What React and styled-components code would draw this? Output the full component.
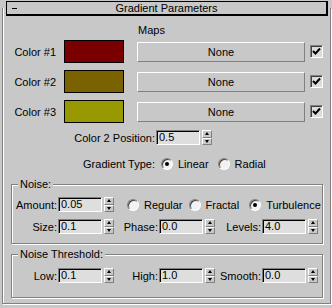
import React from "react";
import styled, { createGlobalStyle } from "styled-components";

const GlobalStyle = createGlobalStyle`
  html, body { margin: 0; padding: 0; background: #c8c8c8; }
  body {
    font-family: "Liberation Sans", Arial, sans-serif;
    font-size: 11px;
    color: #000;
  }
  * { box-sizing: border-box; }
`;

const Panel = styled.div`
  width: 332px;
  height: 308px;
  overflow: hidden;
  padding: 8px 0 0 2px;
`;

const Frame = styled.div`
  width: 329px;
  display: flex;
  flex-direction: column;
  border: 1px solid #808080;
  border-top: none;
  box-shadow: 1px 1px 0 #fff, inset 1px 0 0 #fff;
  padding-bottom: 5px;
`;

const TitleBar = styled.div`
  display: grid;
  grid-template-columns: 1fr auto 1fr;
  align-items: center;
  height: 15px;
  margin: -7px 2px 0 3px;
  border: 1px solid #000;
  border-right-width: 2px;
  border-bottom-width: 2px;
  background: #c8c8c8;
  line-height: 12px;
`;

const Collapse = styled.span`
  width: 5px;
  height: 1px;
  margin-left: 5px;
  background: #000;
`;

const Title = styled.span`
  text-align: center;
`;

const MapsLabel = styled.div`
  margin-top: 8px;
  padding-left: 135px;
  line-height: 12px;
`;

const ColorList = styled.div`
  display: flex;
  flex-direction: column;
  gap: 7px;
  margin-top: 4px;
`;

const ColorRow = styled.div`
  display: flex;
  align-items: center;
  height: 23px;
`;

const RowLabel = styled.span`
  width: ${(p) => p.$w}px;
  text-align: right;
  white-space: nowrap;
  line-height: 12px;
`;

const Swatch = styled.div`
  width: 60px;
  height: 23px;
  margin-left: 8px;
  border: 1px solid #000;
  background: ${(p) => p.$color};
`;

const MapButton = styled.div`
  width: 168px;
  height: 20px;
  margin-left: 13px;
  display: flex;
  align-items: center;
  justify-content: center;
  border: 1px solid;
  border-color: #fff #808080 #808080 #fff;
`;

const Check = styled.div`
  width: 13px;
  height: 13px;
  margin-left: 5px;
  border: 1px solid;
  border-color: #808080 #fff #fff #808080;
  box-shadow: inset 1px 1px 0 #404040;
  background: #dcdcdc;
  display: flex;
  align-items: center;
  justify-content: center;
`;

const LineRow = styled.div`
  display: flex;
  align-items: center;
  height: ${(p) => p.$h}px;
  margin-top: ${(p) => p.$top}px;
`;

const FieldWrap = styled.div`
  display: flex;
  align-items: center;
  height: 15px;
`;

const FieldLabel = styled.span`
  margin-right: 1px;
  white-space: nowrap;
  line-height: 12px;
  ${(p) => (p.$w ? `width: ${p.$w}px; text-align: right;` : "")}
`;

const Edit = styled.div`
  width: 44px;
  height: 15px;
  padding-left: 2px;
  border: 1px solid;
  border-color: #808080 #fff #fff #808080;
  box-shadow: inset 1px 1px 0 #000;
  background: #dedede;
  line-height: 13px;
`;

const Spinner = styled.div`
  width: 10px;
  height: 15px;
  margin-left: 2px;
  display: flex;
  flex-direction: column;
`;

const SpinBtn = styled.div`
  flex: 1;
  display: flex;
  align-items: center;
  justify-content: center;
  border: 1px solid;
  border-color: #fff #808080 #808080 #fff;
  &::after {
    content: "";
    border-left: 2px solid transparent;
    border-right: 2px solid transparent;
    ${(p) => (p.$down ? "border-top: 3px solid #000;" : "border-bottom: 3px solid #000;")}
  }
`;

const RadioSet = styled.div`
  display: flex;
  align-items: center;
  margin-left: ${(p) => p.$left}px;
`;

const RadioItem = styled.label`
  display: flex;
  align-items: center;
  gap: 5px;
  margin-right: ${(p) => p.$gap}px;
  line-height: 12px;
`;

const RadioDot = styled.span`
  width: 12px;
  height: 12px;
  border-radius: 50%;
  border: 1px solid;
  border-color: #808080 #fff #fff #808080;
  box-shadow: inset 1px 1px 0 #404040;
  background: #f2f2f2;
  display: flex;
  align-items: center;
  justify-content: center;
  &::after {
    content: "";
    width: 4px;
    height: 4px;
    border-radius: 50%;
    background: ${(p) => (p.$on ? "#000" : "transparent")};
  }
`;

const Group = styled.div`
  display: flex;
  flex-direction: column;
  width: 312px;
  margin: ${(p) => p.$top}px 0 0 8px;
  padding-bottom: ${(p) => p.$bottom}px;
  border: 1px solid #808080;
  box-shadow: 1px 1px 0 #fff, inset 1px 1px 0 #fff;
`;

const Legend = styled.span`
  align-self: flex-start;
  margin: -7px 0 0 6px;
  padding: 0 2px;
  line-height: 12px;
  background: #c8c8c8;
`;

const FieldGrid = styled.div`
  display: grid;
  grid-template-columns: 102px 101px 103px;
  grid-auto-rows: 15px;
  row-gap: 7px;
  justify-items: end;
  margin-top: ${(p) => p.$top}px;
`;

const RadioCell = styled.div`
  grid-column: span 2;
  justify-self: start;
  display: flex;
  align-items: center;
  padding-left: 13px;
`;

function Field({ label, value, w }) {
  return (
    <FieldWrap>
      <FieldLabel $w={w}>{label}</FieldLabel>
      <Edit>{value}</Edit>
      <Spinner>
        <SpinBtn />
        <SpinBtn $down />
      </Spinner>
    </FieldWrap>
  );
}

function Radio({ label, on, gap = 0 }) {
  return (
    <RadioItem $gap={gap}>
      <RadioDot $on={on} />
      {label}
    </RadioItem>
  );
}

const colors = [
  { label: "Color #1", color: "#7a0000" },
  { label: "Color #2", color: "#7a6200" },
  { label: "Color #3", color: "#989800" },
];

export default function App() {
  return (
    <>
      <GlobalStyle />
      <Panel>
        <Frame>
          <TitleBar>
            <Collapse />
            <Title>Gradient Parameters</Title>
            <span />
          </TitleBar>
          <MapsLabel>Maps</MapsLabel>
          <ColorList>
            {colors.map((c) => (
              <ColorRow key={c.label}>
                <RowLabel $w={53}>{c.label}</RowLabel>
                <Swatch $color={c.color} />
                <MapButton>None</MapButton>
                <Check>
                  <svg width="9" height="9" viewBox="0 0 9 9">
                    <path d="M1 4 L3.5 6.5 L8 1.5" fill="none" stroke="#000" strokeWidth="2" />
                  </svg>
                </Check>
              </ColorRow>
            ))}
          </ColorList>
          <LineRow $h={15} $top={7}>
            <Field label="Color 2 Position:" value="0.5" w={152} />
          </LineRow>
          <LineRow $h={12} $top={13}>
            <RowLabel $w={152}>Gradient Type:</RowLabel>
            <RadioSet $left={6}>
              <Radio label="Linear" on gap={9} />
              <Radio label="Radial" />
            </RadioSet>
          </LineRow>
          <Group $top={14} $bottom={9}>
            <Legend>Noise:</Legend>
            <FieldGrid $top={7}>
              <Field label="Amount:" value="0.05" />
              <RadioCell>
                <Radio label="Regular" gap={6} />
                <Radio label="Fractal" gap={10} />
                <Radio label="Turbulence" on />
              </RadioCell>
              <Field label="Size:" value="0.1" />
              <Field label="Phase:" value="0.0" />
              <Field label="Levels:" value="4.0" />
            </FieldGrid>
          </Group>
          <Group $top={10} $bottom={14}>
            <Legend>Noise Threshold:</Legend>
            <FieldGrid $top={8}>
              <Field label="Low:" value="0.1" />
              <Field label="High:" value="1.0" />
              <Field label="Smooth:" value="0.0" />
            </FieldGrid>
          </Group>
        </Frame>
      </Panel>
    </>
  );
}
